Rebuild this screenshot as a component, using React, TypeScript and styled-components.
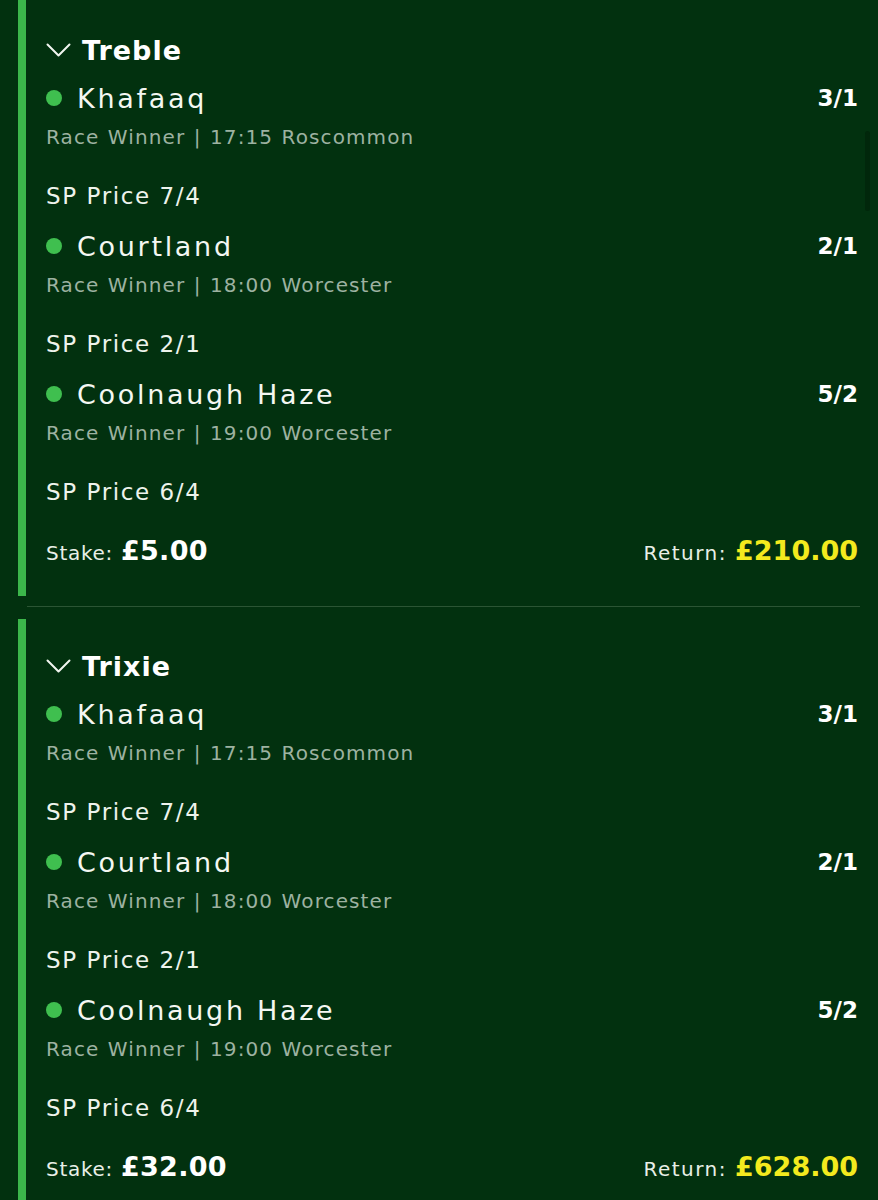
import React from 'react'
import styled, { createGlobalStyle } from 'styled-components'

type Selection = {
  name: string
  odds: string
  market: string
  race: string
  sp: string
}

type Bet = {
  type: string
  stake: string
  returns: string
  selections: Selection[]
}

const selections: Selection[] = [
  { name: 'Khafaaq', odds: '3/1', market: 'Race Winner', race: '17:15 Roscommon', sp: '7/4' },
  { name: 'Courtland', odds: '2/1', market: 'Race Winner', race: '18:00 Worcester', sp: '2/1' },
  { name: 'Coolnaugh Haze', odds: '5/2', market: 'Race Winner', race: '19:00 Worcester', sp: '6/4' },
]

const bets: Bet[] = [
  { type: 'Treble', stake: '£5.00', returns: '£210.00', selections },
  { type: 'Trixie', stake: '£32.00', returns: '£628.00', selections },
]

const GlobalStyle = createGlobalStyle`
  html, body {
    margin: 0;
    padding: 0;
    background: #02310f;
  }
  body {
    font-family: 'DejaVu Sans', 'Open Sans', sans-serif;
    color: #f1f5ef;
  }
`

const Page = styled.div`
  position: relative;
  width: 878px;
  height: 1200px;
  overflow: hidden;
  background: #02310f;
`

const ScrollThumb = styled.div`
  position: absolute;
  right: 8px;
  top: 131px;
  width: 5px;
  height: 80px;
  border-radius: 3px;
  background: #01270b;
`

const Card = styled.section<{ $first?: boolean }>`
  margin-left: 18px;
  border-left: 8px solid #3cb64b;
  padding: ${(p) => (p.$first ? '32px' : '29px')} 20px 26px 20px;
  display: flex;
  flex-direction: column;
`

const Separator = styled.hr`
  margin: 10px 18px 12px 27px;
  border: 0;
  height: 1px;
  background: #2b5534;
`

const Title = styled.h2`
  margin: 0;
  display: flex;
  align-items: center;
  gap: 11px;
  height: 36px;
  font-size: 27px;
  font-weight: 700;
  letter-spacing: 1px;
  color: #ffffff;
`

const Chevron = () => (
  <svg width="25" height="14" viewBox="0 0 25 14" fill="none">
    <polyline points="1.5,1.5 12.5,12.5 23.5,1.5" stroke="#f1f5ef" strokeWidth="2" strokeLinecap="round" strokeLinejoin="round" />
  </svg>
)

const SelectionBlock = styled.div`
  margin-top: 10px;
  display: flex;
  flex-direction: column;
  & + & {
    margin-top: 14px;
  }
`

const NameRow = styled.div`
  display: flex;
  align-items: center;
  height: 40px;
`

const Dot = styled.span`
  width: 16px;
  height: 16px;
  border-radius: 50%;
  background: #3fbf4f;
  margin-right: 15px;
  flex: none;
`

const Name = styled.span`
  font-size: 27px;
  font-weight: 400;
  letter-spacing: 2.7px;
  color: #f4f7f2;
  flex: 1;
`

const Odds = styled.span`
  font-size: 23px;
  font-weight: 700;
  color: #ffffff;
`

const Market = styled.div`
  margin-top: 5px;
  line-height: 28px;
  font-size: 20px;
  letter-spacing: 1.1px;
  word-spacing: 1px;
  color: #9db2a1;
`

const Sp = styled.div`
  margin-top: 29px;
  line-height: 32px;
  font-size: 23px;
  letter-spacing: 1.6px;
  color: #eef3ec;
`

const Footer = styled.div`
  margin-top: 22px;
  height: 40px;
  display: flex;
  align-items: center;
  justify-content: space-between;
`

const Label = styled.span<{ $wide?: boolean }>`
  font-size: 20px;
  letter-spacing: ${(p) => (p.$wide ? '1.5px' : '0.7px')};
  color: #e9efe7;
`

const Amount = styled.span<{ $highlight?: boolean }>`
  margin-left: 8px;
  font-size: 27px;
  font-weight: 700;
  letter-spacing: ${(p) => (p.$highlight ? '0' : '0.3px')};
  color: ${(p) => (p.$highlight ? '#f3ea1e' : '#ffffff')};
`

export default function App() {
  return (
    <>
      <GlobalStyle />
      <Page>
        {bets.map((bet, i) => (
          <React.Fragment key={bet.type}>
            {i > 0 && <Separator />}
            <Card $first={i === 0}>
              <Title>
                <Chevron />
                {bet.type}
              </Title>
              {bet.selections.map((s) => (
                <SelectionBlock key={s.name}>
                  <NameRow>
                    <Dot />
                    <Name>{s.name}</Name>
                    <Odds>{s.odds}</Odds>
                  </NameRow>
                  <Market>
                    {s.market} | {s.race}
                  </Market>
                  <Sp>SP Price {s.sp}</Sp>
                </SelectionBlock>
              ))}
              <Footer>
                <span>
                  <Label>Stake:</Label>
                  <Amount>{bet.stake}</Amount>
                </span>
                <span>
                  <Label $wide>Return:</Label>
                  <Amount $highlight>{bet.returns}</Amount>
                </span>
              </Footer>
            </Card>
          </React.Fragment>
        ))}
        <ScrollThumb />
      </Page>
    </>
  )
}
